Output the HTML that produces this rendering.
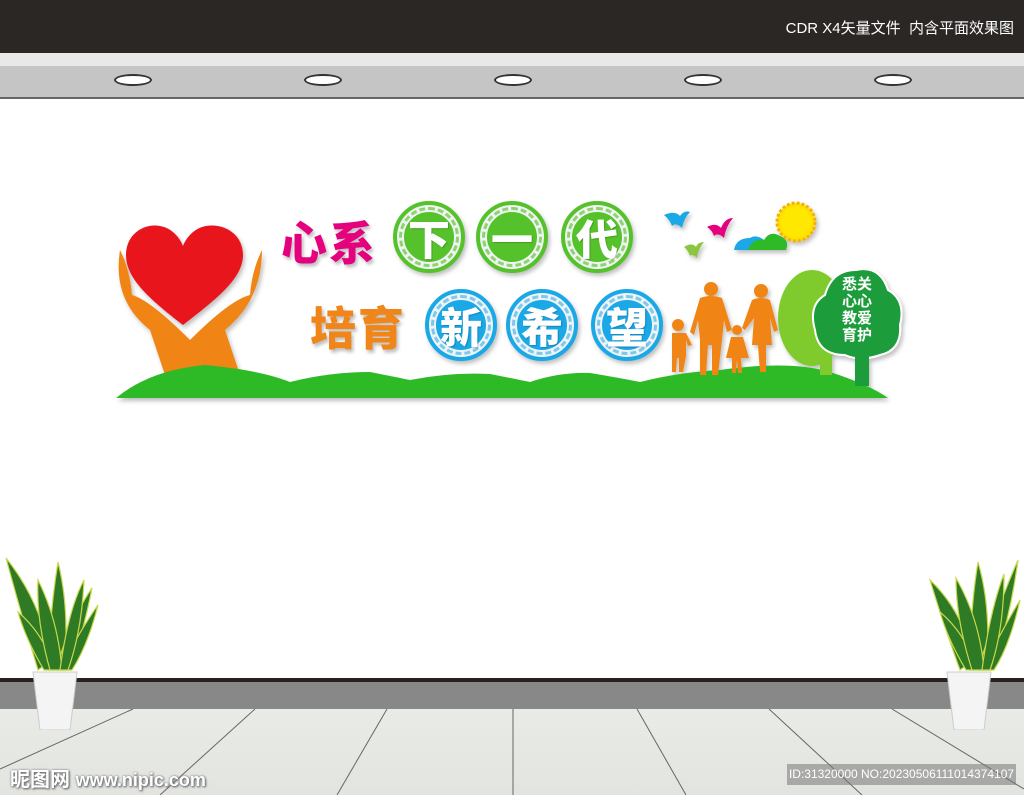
<!DOCTYPE html>
<html><head><meta charset="utf-8"><style>
body{margin:0;width:1024px;height:795px;overflow:hidden;position:relative;background:#fff;font-family:"Liberation Sans","Noto Sans CJK SC",sans-serif}
.a{position:absolute}
.c{position:absolute;width:72px;height:72px;border-radius:50%;box-sizing:border-box;border:3px solid;display:flex;align-items:center;justify-content:center;color:#fff;font-size:42px;font-weight:900;font-family:"Noto Sans CJK SC",sans-serif;box-shadow:2px 3px 4px rgba(0,0,0,.25)}
.c::before{content:"";position:absolute;inset:1px;border-radius:50%;border:7px solid #eef3f5}
.c::after{content:"";position:absolute;inset:3px;border-radius:50%;border:3px dashed}
.g{background:#56c22b;border-color:#56c22b;color:#fff}
.g::after{border-color:#8fd46a}
.b{background:#1aa8e6;border-color:#1aa8e6}
.b::after{border-color:#7cc8ee}
.c span{position:relative;z-index:1;text-shadow:1px 1px 1px rgba(0,0,0,.2)}
.t{font-family:"Noto Sans CJK SC",sans-serif;font-weight:900;font-size:46px;text-shadow:2px 3px 3px rgba(0,0,0,.25);letter-spacing:2px}
.light{position:absolute;top:74px;width:38px;height:12px;border-radius:50%;background:#fff;border:2px solid #333;box-sizing:border-box}
</style></head><body>
<div class="a" style="left:0;top:0;width:1024px;height:53px;background:#2b2725"></div>
<div class="a" style="right:10px;top:17px;color:#fff;font-size:15px;font-family:'Liberation Sans','Noto Sans CJK SC',sans-serif">CDR X4矢量文件&nbsp; 内含平面效果图</div>
<div class="a" style="left:0;top:53px;width:1024px;height:13px;background:#e8e8e8"></div>
<div class="a" style="left:0;top:66px;width:1024px;height:31px;background:#c5c5c5;border-bottom:2px solid #666"></div>
<div class="light" style="left:114px"></div><div class="light" style="left:304px"></div><div class="light" style="left:494px"></div><div class="light" style="left:684px"></div><div class="light" style="left:874px"></div>

<div class="a" style="left:0;top:678px;width:1024px;height:4px;background:#2a2020"></div>
<div class="a" style="left:0;top:682px;width:1024px;height:27px;background:#888"></div>
<div class="a" style="left:0;top:709px;width:1024px;height:86px;background:linear-gradient(#e9ebe7,#e2e4e0)"></div>
<svg class="a" style="left:0;top:709px" width="1024" height="86"><g stroke="#666" stroke-width="1">
<line x1="133" y1="0" x2="0" y2="60"/><line x1="255" y1="0" x2="160" y2="86"/><line x1="387" y1="0" x2="337" y2="86"/><line x1="513" y1="0" x2="513" y2="86"/><line x1="637" y1="0" x2="686" y2="86"/><line x1="769" y1="0" x2="862" y2="86"/><line x1="892" y1="0" x2="1024" y2="80"/></g></svg>

<svg class="a" style="left:0;top:550px" width="110" height="180">
<g fill="#2f7a25" stroke="#c8d84a" stroke-width="1.2">
<path d="M38 120 Q20 60 6 8 Q40 50 52 110Z"/><path d="M48 120 Q50 60 58 12 Q70 60 64 120Z"/><path d="M56 120 Q70 70 92 38 Q84 80 70 120Z"/><path d="M44 120 Q26 90 18 62 Q44 84 55 120Z"/><path d="M60 120 Q80 80 98 55 Q88 95 72 120Z"/><path d="M50 120 Q36 70 38 30 Q58 70 62 120Z"/><path d="M60 120 Q68 60 84 30 Q82 80 68 120Z"/></g>
<path d="M33 122 L77 122 L70 180 L40 180Z" fill="#f4f4f4" stroke="#ccc"/></svg>
<svg class="a" style="left:922px;top:550px" width="110" height="180">
<g fill="#2f7a25" stroke="#c8d84a" stroke-width="1.2">
<path d="M38 120 Q20 70 8 30 Q40 60 52 110Z"/><path d="M48 120 Q48 60 56 12 Q70 60 64 120Z"/><path d="M56 120 Q74 60 96 10 Q88 70 70 120Z"/><path d="M44 120 Q26 90 18 62 Q44 84 55 120Z"/><path d="M60 120 Q80 80 98 50 Q88 95 72 120Z"/><path d="M50 120 Q34 70 34 28 Q58 70 62 120Z"/><path d="M60 120 Q68 60 82 24 Q82 80 68 120Z"/></g>
<path d="M25 122 L69 122 L62 180 L32 180Z" fill="#f4f4f4" stroke="#ccc"/></svg>

<svg class="a" style="left:0;top:0" width="1024" height="420">
<defs><filter id="s"><feDropShadow dx="2" dy="3" stdDeviation="2" flood-opacity=".25"/></filter></defs>
<g filter="url(#s)">
<path d="M120 250 Q112 300 150 330 L165 375 L240 375 L225 330 Q262 300 262 250 Q252 270 250 295 Q230 300 190 340 Q150 300 132 295 Q130 270 120 250Z" fill="#f08519"/>
<path d="M183 325 C148 298 126 278 126 255 C126 234 144 223 160 226 C172 228 180 238 183 246 C186 238 194 228 206 226 C224 223 243 234 243 255 C243 278 218 298 183 325Z" fill="#e8141c"/>
<path d="M116 398 Q150 370 205 365 Q260 370 290 382 Q330 372 370 372 Q400 378 410 380 Q450 372 490 374 Q520 380 530 382 Q560 372 590 373 Q620 378 640 382 Q680 372 720 370 Q790 360 830 372 Q870 385 888 398Z" fill="#2db928"/>
<path d="M664 215 Q675 210 680 216 Q684 210 690 212 Q684 218 682 228 Q676 222 672 226 Q670 220 664 215Z" fill="#1aa8e6"/>
<path d="M707 227 Q716 222 721 228 Q725 218 733 218 Q726 226 724 238 Q718 232 714 236 Q712 230 707 227Z" fill="#e5007e"/>
<path d="M684 247 Q692 242 696 247 Q698 242 704 242 Q698 249 697 258 Q692 253 690 256 Q688 250 684 247Z" fill="#8cc63f"/>
<path d="M734 250 Q736 238 750 238 Q756 234 764 240 Q770 242 770 250Z" fill="#1aa8e6"/>
<path d="M748 250 Q752 238 764 240 Q770 230 780 236 Q790 240 786 250Z" fill="#2db928"/>
<circle cx="796" cy="222" r="19" fill="#ffe100" stroke="#f6b100" stroke-width="3" stroke-dasharray="3 2"/>
<circle cx="796" cy="222" r="15" fill="#ffe800"/>
<ellipse cx="812" cy="318" rx="34" ry="48" fill="#7fcb2f"/><rect x="820" y="350" width="12" height="25" fill="#7fcb2f"/>
<path d="M856 270 Q880 265 888 290 Q906 300 900 325 Q902 350 880 355 Q860 362 845 355 Q818 355 815 330 Q808 305 825 295 Q832 270 856 270Z" fill="#1a9c3a" stroke="#fff" stroke-width="2"/>
<rect x="855" y="350" width="14" height="36" fill="#1a9c3a"/>
<g fill="#f08519">
<circle cx="711" cy="289" r="7"/><path d="M700 298 Q711 294 722 298 L732 330 L727 332 L724 320 L722 340 L718 375 L712 375 L712 345 L708 345 L706 375 L700 375 L700 340 L698 320 L694 335 L690 332Z"/>
<circle cx="761" cy="291" r="7"/><path d="M752 300 Q761 296 770 300 L778 330 L774 332 L770 318 L772 345 L766 345 L766 372 L760 372 L758 345 L752 345 L754 318 L745 330 L742 328Z"/>
<circle cx="678" cy="325" r="6"/><path d="M672 333 L686 333 L692 345 L688 346 L686 340 L686 356 L683 372 L679 372 L679 358 L677 358 L676 372 L672 372 L672 348 Z"/>
<circle cx="737" cy="330" r="5"/><path d="M731 337 L743 337 L749 358 L741 358 L742 373 L738 373 L737 360 L736 373 L732 373 L732 358 L726 358Z"/>
</g>
</g>
</svg>
<div class="a" style="left:842px;top:275px;color:#fff;font-size:15px;line-height:17px;font-weight:700;font-family:'Noto Sans CJK SC',sans-serif">悉关<br>心心<br>教爱<br>育护</div>

<div class="a t" style="left:281px;top:208px;color:#e5007e">心系</div>
<div class="a t" style="left:310px;top:293px;color:#f08519">培育</div>
<div class="c g" style="left:393px;top:201px"><span>下</span></div>
<div class="c g" style="left:476px;top:201px"><span>一</span></div>
<div class="c g" style="left:561px;top:201px"><span>代</span></div>
<div class="c b" style="left:425px;top:289px"><span>新</span></div>
<div class="c b" style="left:506px;top:289px"><span>希</span></div>
<div class="c b" style="left:591px;top:289px"><span>望</span></div>

<div class="a" style="left:10px;top:763px;color:#fff;font-size:20px;font-weight:700;text-shadow:0 0 2px #777,1px 1px 2px #555">昵图网 <span style="font-size:18px">www.nipic.com</span></div>
<div class="a" style="left:787px;top:764px;width:229px;height:21px;background:rgba(120,120,120,.55);color:#fff;font-size:12px;line-height:21px;text-align:center">ID:31320000 NO:20230506111014374107</div>
</body></html>
